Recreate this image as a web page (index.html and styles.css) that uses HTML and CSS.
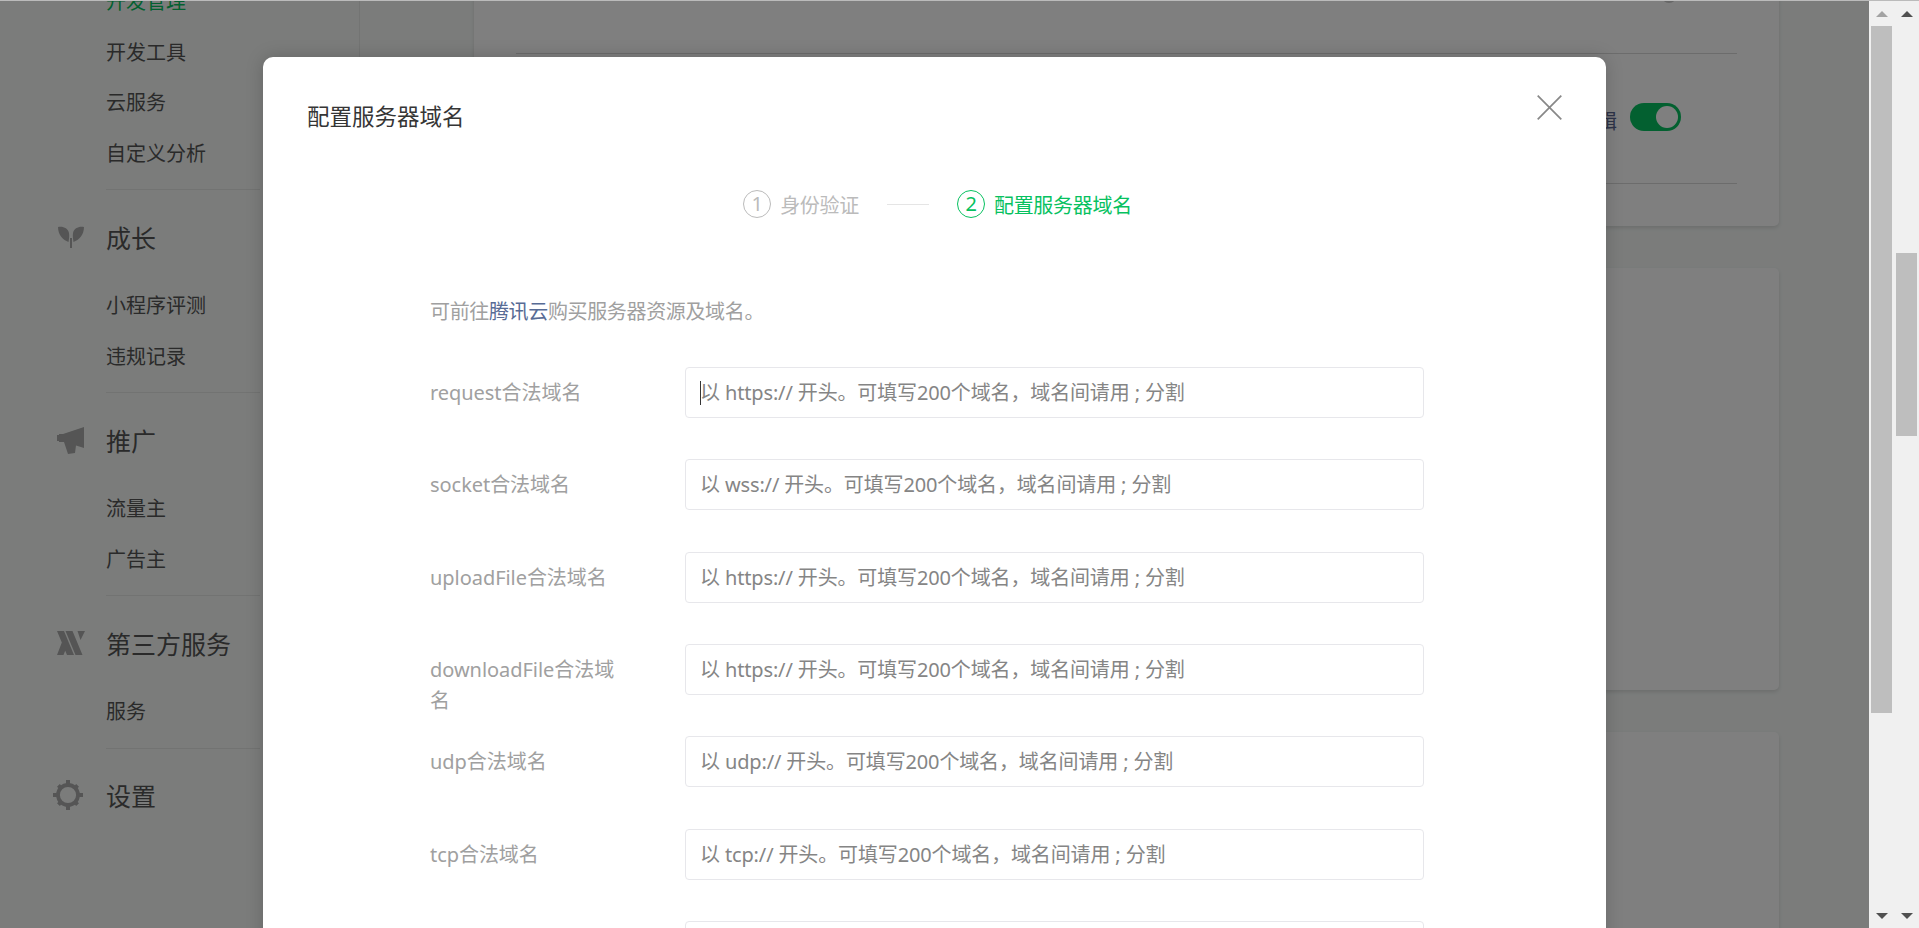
FILE: index.html
```html
<!DOCTYPE html>
<html lang="zh-CN">
<head>
  <meta charset="UTF-8"/>
  <meta name="viewport" content="width=device-width, initial-scale=1.0"/>
  <title>配置服务器域名</title>
  <link rel="stylesheet" href="styles.css">
</head>
<body>
  <div class="viewport">
    <div class="page">
      <aside class="sidebar">
        <nav class="nav">
          <div class="nav-group nav-first">
            <a class="nav-item active">开发管理</a>
            <a class="nav-item">开发工具</a>
            <a class="nav-item">云服务</a>
            <a class="nav-item">自定义分析</a>
          </div>
          <div class="nav-group">
            <div class="nav-head">
              <span class="nav-icon">
                <svg width="28" height="24" viewBox="0 0 28 24"><path d="M1 2c5-1 10 1 11 6 .5 3 0 6-.5 9C6 15 1 10 1 2zM27 2c-5-1-10 1-11 6-.5 3 0 6 .5 9 5.500-2 10.500-7 10.500-15z"/><path d="M13 13h2v10h-2z"/></svg>
              </span>
              成长
            </div>
            <a class="nav-item">小程序评测</a>
            <a class="nav-item">违规记录</a>
          </div>
          <div class="nav-group">
            <div class="nav-head">
              <span class="nav-icon">
                <svg width="28" height="29" viewBox="0 0 28 29"><path d="M0 9h2v-1h4L27 1v21L19 19.500l-1 7.500-7 1-4-12H2v-1H0z"/></svg>
              </span>
              推广
            </div>
            <a class="nav-item">流量主</a>
            <a class="nav-item">广告主</a>
          </div>
          <div class="nav-group">
            <div class="nav-head">
              <span class="nav-icon">
                <svg width="28" height="24" viewBox="0 0 28 24"><path d="M0 0h7l10 24h-7zM8.500 0h7l10 24h-7zM20.500 0H28l-4.500 9zM5 11l3.500 8-2 5H0z"/></svg>
              </span>
              第三方服务
            </div>
            <a class="nav-item">服务</a>
          </div>
          <div class="nav-group nav-last">
            <div class="nav-head">
              <span class="nav-icon nav-icon-gear">
                <svg width="30" height="30" viewBox="0 0 30 30"><circle cx="15" cy="15" r="10" fill="none" stroke="#ababab" stroke-width="3.800"/><path d="M13 0h4v4h-4zM13 26h4v4h-4zM0 13h4v4H0zM26 13h4v4h-4zM4 6.800l2.800-2.800 3 3-2.800 2.800zM20.200 23l2.800-2.800 3 3-2.800 2.800zM23.200 4l2.800 2.800-3 3-2.800-2.800zM7 20.200l2.800 2.800-3 3-2.800-2.800z"/></svg>
              </span>
              设置
            </div>
          </div>
        </nav>
      </aside>
      <div class="subcol"></div>
      <main class="main">
        <section class="card card-top">
          <div class="card-row row-a"><span class="dot"></span></div>
          <div class="card-row row-b">
            <span class="row-text">编辑</span>
            <span class="switch"><span class="knob"></span></span>
          </div>
        </section>
        <section class="card card-mid"></section>
        <section class="card card-low"></section>
      </main>
    </div>

    <div class="mask">
      <div class="dialog">
        <header class="dialog-head">
          <h3 class="dialog-title">配置服务器域名</h3>
          <button class="close" aria-label="关闭">
            <svg width="25" height="25" viewBox="0 0 25 25"><path d="M.7.7l23.600 23.600M24.300.7L.7 24.300" fill="none" stroke="#888" stroke-width="1.700"/></svg>
          </button>
        </header>

        <div class="steps">
          <div class="step"><span class="step-num">1</span>身份验证</div>
          <span class="step-line"></span>
          <div class="step current"><span class="step-num">2</span>配置服务器域名</div>
        </div>

        <form class="domain-form">
          <p class="hint">可前往<a class="link">腾讯云</a>购买服务器资源及域名。</p>
          <div class="field">
            <label class="field-label">request合法域名</label>
            <div class="field-box">
              <span class="caret"></span>
              <input class="field-input" type="text" placeholder="以 https:// 开头。可填写200个域名，域名间请用 ; 分割"/>
            </div>
          </div>
          <div class="field">
            <label class="field-label">socket合法域名</label>
            <div class="field-box"><input class="field-input" type="text" placeholder="以 wss:// 开头。可填写200个域名，域名间请用 ; 分割"/></div>
          </div>
          <div class="field">
            <label class="field-label">uploadFile合法域名</label>
            <div class="field-box"><input class="field-input" type="text" placeholder="以 https:// 开头。可填写200个域名，域名间请用 ; 分割"/></div>
          </div>
          <div class="field">
            <label class="field-label">downloadFile合法域名</label>
            <div class="field-box"><input class="field-input" type="text" placeholder="以 https:// 开头。可填写200个域名，域名间请用 ; 分割"/></div>
          </div>
          <div class="field">
            <label class="field-label">udp合法域名</label>
            <div class="field-box"><input class="field-input" type="text" placeholder="以 udp:// 开头。可填写200个域名，域名间请用 ; 分割"/></div>
          </div>
          <div class="field">
            <label class="field-label">tcp合法域名</label>
            <div class="field-box"><input class="field-input" type="text" placeholder="以 tcp:// 开头。可填写200个域名，域名间请用 ; 分割"/></div>
          </div>
          <div class="field">
            <label class="field-label"></label>
            <div class="field-box"><input class="field-input" type="text"/></div>
          </div>
        </form>
      </div>
    </div>
  </div>

  <div class="scrollbar">
    <span class="arrow up off"></span>
    <span class="track"><span class="thumb thumb-outer"></span></span>
    <span class="arrow down"></span>
  </div>
  <div class="scrollbar">
    <span class="arrow up"></span>
    <span class="track"><span class="thumb thumb-inner"></span></span>
    <span class="arrow down"></span>
  </div>
</body>
</html>
```

FILE: styles.css
```css
:root{
  --green:#07c160; --link:#576b95; --line:#e7e7eb;
  --font:"Noto Sans","Noto Sans CJK SC",sans-serif;
}
*{box-sizing:border-box;margin:0;padding:0;}
html,body{height:100%;overflow:hidden;}
body{display:flex;border-top:1px solid #bbb;background:#f6f9f7;font-family:var(--font);color:#353535;}

.viewport{flex:1;position:relative;overflow:hidden;min-width:0;}
.page{display:flex;margin-top:-25px;align-items:flex-start;}

/* sidebar */
.sidebar{width:360px;flex:none;border-right:1px solid #e6e8e6;height:1100px;}
.nav{margin:1px 99px 0 106px;}
.nav-group{padding-bottom:10px;border-bottom:1px solid #e4e6e4;}
.nav-last{border-bottom:none;}
.nav-item{display:block;height:50.500px;line-height:50.500px;font-size:20px;color:#555;}
.nav-item.active{color:var(--green);}
.nav-head{display:flex;align-items:center;height:50px;margin:22px 0 19px -53px;font-size:25px;color:#555;}
.nav-head:only-child{margin-top:21px;}
.nav-icon{display:flex;justify-content:flex-start;width:53px;padding-left:4px;flex:none;}
.nav-icon svg{fill:#ababab;}
.nav-icon-gear{padding-left:0;}
.subcol{width:114px;flex:none;}

/* main cards */
.main{flex:1;min-width:0;padding-right:90px;display:flex;flex-direction:column;gap:42px;}
.card{background:#fff;border-radius:5px;box-shadow:0 2px 4px rgba(0,0,0,.12);padding:0 42px;}
.card-top{height:250px;}
.card-mid{height:422px;}
.card-low{height:500px;}
.card-row{display:flex;justify-content:flex-end;border-bottom:1px solid #d8d8d8;}
.row-a{height:78px;padding-right:60px;}
.row-b{height:130px;padding:49px 56px 0 0;align-items:flex-start;}
.dot{width:16px;height:16px;margin-top:11px;border-radius:50%;background:#ccc;}
.row-text{font-size:20px;line-height:28px;margin:5px 13px 0 0;color:#5a6690;}
.switch{display:flex;justify-content:flex-end;align-items:center;width:51px;height:28px;padding-right:3px;border-radius:14px;background:var(--green);}
.knob{width:22px;height:22px;border-radius:50%;background:#fff;}

/* mask and dialog */
.mask{position:absolute;inset:0;background:rgba(0,0,0,.5);}
.dialog{position:absolute;left:263px;top:56px;width:1343px;height:1000px;background:#fff;border-radius:10px;box-shadow:0 0 18px rgba(0,0,0,.18);}
.dialog-head{display:flex;justify-content:space-between;padding:37px 44px 0 44px;height:127px;}
.dialog-title{font-size:22.500px;font-weight:400;line-height:46px;color:#353535;}
.close{border:none;background:none;height:25px;margin-top:1px;}

.steps{display:flex;align-items:center;justify-content:center;height:40px;padding-left:6px;font-size:20px;letter-spacing:-.3px;color:#bbb;}
.step{display:flex;align-items:center;gap:9px;}
.step-num{display:flex;align-items:center;justify-content:center;width:28px;height:28px;border:1px solid #bbb;border-radius:50%;font-size:20px;line-height:1;}
.step.current{color:var(--green);}
.step.current .step-num{border-color:var(--green);}
.step-line{width:42px;height:1px;margin:0 28px;background:#e5e5e5;}

.domain-form{padding:0 0 0 167px;margin-top:73px;}
.hint{font-size:20px;line-height:30px;letter-spacing:-.35px;color:#a0a0a0;margin-bottom:40px;}
.link{color:var(--link);}
.field{display:flex;height:92.330px;}
.field-label{width:190px;margin-right:65px;padding-top:10px;font-size:20px;line-height:31px;letter-spacing:-.05px;color:#a0a0a0;flex:none;}
.field-box{position:relative;width:739px;height:51px;}
.field-input{width:100%;height:100%;padding:0 14px;border:1px solid var(--line);border-radius:4px;font:20px var(--font);letter-spacing:-.14px;outline:none;background:#fff;}
.field-input::placeholder{color:#858585;opacity:1;}
.caret{position:absolute;left:15px;top:14px;width:1px;height:24px;background:#353535;}

/* the two stacked browser scrollbars */
.scrollbar{width:25px;flex:none;display:flex;flex-direction:column;align-items:center;background:#f0f0f0;height:100%;}
.arrow{display:flex;align-items:center;justify-content:center;width:100%;height:25px;flex:none;}
.arrow::before{content:"";border-left:6px solid transparent;border-right:6px solid transparent;}
.arrow.up::before{border-bottom:6px solid #505050;}
.arrow.down::before{border-top:6px solid #505050;}
.arrow.off::before{border-bottom-color:#a3a3a3;}
.track{flex:1;width:21px;}
.thumb{display:block;width:21px;background:#bebebe;}
.thumb-outer{height:687px;}
.thumb-inner{height:183px;margin-top:227px;}
```
